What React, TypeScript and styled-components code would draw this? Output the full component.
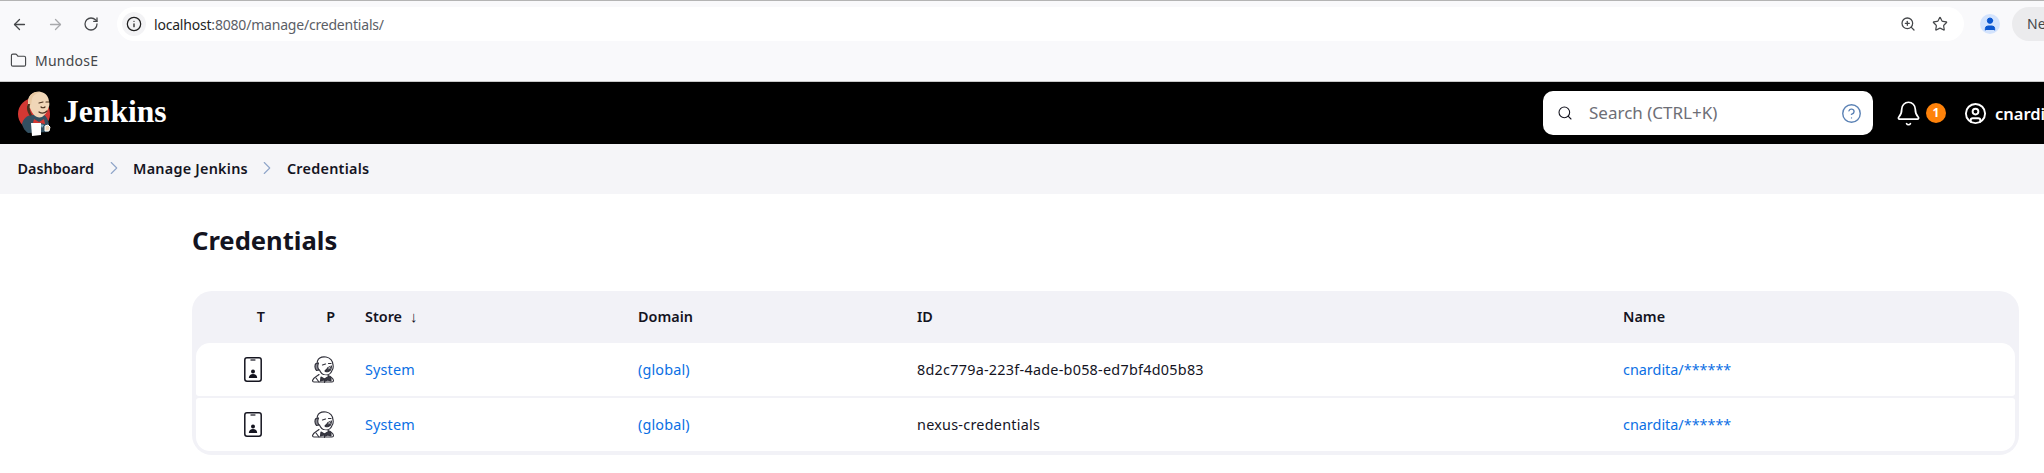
import React from "react";
import styled, { createGlobalStyle } from "styled-components";
import { ArrowLeft, ArrowRight, RotateCw, Info, ZoomIn, Star, Folder, Search, CircleHelp, Bell, CircleUser, User, ChevronRight } from "lucide-react";

const Global = createGlobalStyle`
  html, body { margin: 0; padding: 0; background: #fff; overflow: hidden; }
  body { width: 2044px; height: 473px; font-family: "Noto Sans", "Open Sans", sans-serif; color: #14141f; }
  * { box-sizing: border-box; }
`;

const Page = styled.div`width: 2044px; height: 473px; overflow: hidden; display: flex; flex-direction: column;`;

const BrowserToolbar = styled.div`
  height: 47px; flex: none; background: #f9f9fb; border-top: 1px solid #b4b4b4;
  display: flex; align-items: center; padding: 0 0 0 10px;
`;
const NavButton = styled.span<{ $off?: boolean }>`
  width: 18px; height: 18px; margin-right: 18px; flex: none; display: flex; align-items: center; justify-content: center;
  color: ${p => (p.$off ? "#a8a9ac" : "#45474a")};
`;
const Omnibox = styled.div`
  margin-left: -1px; width: 1847px; height: 34px; flex: none; background: #fff; border-radius: 17px;
  display: flex; align-items: center; padding: 0 0 0 5px;
`;
const InfoChip = styled.span`
  width: 24px; height: 24px; border-radius: 50%; background: #f3f3f5; color: #1f1f1f;
  display: flex; align-items: center; justify-content: center; flex: none;
`;
const Url = styled.span`
  margin-left: 8px; font-size: 14px; color: #1f1f1f; letter-spacing: -0.2px; white-space: nowrap;
`;
const UrlRest = styled.span`color: #5b5e66;`;
const OmniIcons = styled.div`margin-left: auto; padding-right: 16px; display: flex; align-items: center; gap: 16px; color: #45474a;`;
const Avatar = styled.span`
  width: 20px; height: 20px; margin-left: 16px; border-radius: 50%; background: #d3e3fd; color: #0b57d0; flex: none;
  display: flex; align-items: center; justify-content: center; overflow: hidden;
`;
const NewPill = styled.span`
  margin-left: 12px; width: 60px; height: 34px; border-radius: 17px 0 0 17px; background: #ebebed; color: #45474a; flex: none;
  padding-left: 15px; font-size: 14px; line-height: 34px;
`;

const Bookmarks = styled.div`
  height: 35px; flex: none; background: #f9f9fb; border-bottom: 1px solid #c8c8c8;
  display: flex; align-items: center; padding: 0 0 8px 10px; gap: 8px;
  font-size: 14px; color: #45474a; letter-spacing: 0.25px;
`;

const Header = styled.header`
  height: 62px; flex: none; background: #000; display: flex; align-items: center; padding-left: 17px; color: #fff; overflow: hidden;
`;
const Brand = styled.div`width: 1526px; flex: none; display: flex; align-items: center; gap: 8px;`;
const BrandName = styled.span`font-family: "Liberation Serif", serif; font-weight: 700; font-size: 31.6px; line-height: 1; margin-top: -2px;`;
const SearchBox = styled.div`
  width: 330px; height: 44px; flex: none; background: #fff; border-radius: 10px; color: #14141f;
  display: flex; align-items: center; padding: 0 11px 0 14px;
`;
const SearchText = styled.span`margin: -2px 0 0 16px; color: #6d6e76; font-size: 17px; flex: 1; white-space: nowrap;`;
const BellWrap = styled.span`margin-left: 21px; width: 28px; flex: none; display: flex; justify-content: center;`;
const Badge = styled.span`
  margin-left: 4px; width: 20px; height: 20px; border-radius: 50%; background: #fe820a; color: #fff; flex: none;
  font-size: 12px; font-weight: 700; line-height: 20px; text-align: center;
`;
const UserIconWrap = styled.span`margin-left: 18px; flex: none; display: flex;`;
const UserName = styled.span`margin-left: 8px; font-size: 16.5px; font-weight: 600; white-space: nowrap; flex: none;`;

const Crumbs = styled.nav`
  height: 50px; flex: none; background: #f5f5f8; display: flex; align-items: center; padding: 0 0 2px 17.5px;
  font-size: 14.4px; font-weight: 600; color: #14141f;
`;
const Crumb = styled.span<{ $spacing?: number }>`white-space: nowrap; letter-spacing: ${p => p.$spacing ?? 0.25}px;`;
const CrumbSep = styled.span`width: 39px; flex: none; display: flex; justify-content: center; color: #8fa5c9;`;

const Main = styled.main`padding: 0 25px 0 192px; flex: 1;`;
const Title = styled.h1`margin: 30px 0 33px; font-size: 25.6px; line-height: 34px; font-weight: 700; color: #14141f;`;

const Table = styled.div`
  width: 1827px; height: 164px; background: #f2f2f7; border-radius: 20px; padding: 0 4px 4px;
`;
const columns = "85px 70px 273px 279px 706px 1fr";
const HeadRow = styled.div`
  height: 52px; padding-bottom: 2px; display: grid; grid-template-columns: ${columns}; align-items: center;
  font-size: 14.4px; font-weight: 600; color: #14141f;
`;
const HeadCell = styled.div<{ $right?: boolean }>`
  white-space: nowrap;
  ${p => (p.$right ? "text-align: right; padding-right: 16px;" : "padding-left: 14px;")}
`;
const SortArrow = styled.span`margin-left: 8px; font-family: "Liberation Sans", sans-serif; font-weight: 400; font-size: 15px;`;
const Row = styled.div<{ $pos: "first" | "last" }>`
  height: 53px; margin-bottom: 2px; background: #fff; display: grid; grid-template-columns: ${columns}; align-items: center;
  font-size: 14.4px; color: #14141f;
  border-radius: ${p => (p.$pos === "first" ? "14px 14px 3px 3px" : "3px 3px 14px 14px")};
`;
const IconCell = styled.div<{ $inset: number }>`display: flex; justify-content: flex-end; padding-right: ${p => p.$inset}px;`;
const Cell = styled.div<{ $spacing?: number }>`padding-left: 14px; white-space: nowrap; letter-spacing: ${p => p.$spacing ?? 0}px;`;
const Link = styled.a`color: #0b6fe4; text-decoration: none;`;

const JenkinsLogo = () => (
  <svg width="38" height="46" viewBox="0 0 38 46">
    <circle cx="17" cy="24" r="16" fill="#d33833" />
    <path d="M5 34c1-5 5-9 10-9l12 0c3 2 5 6 5 11l-1 6-20 1C8 41 6 38 5 34z" fill="#335061" />
    <path d="M12 7c2-4 7-6 12-5 5 1 8 5 8 10 1 2 0 5-1 7-1 3-3 6-6 8-3 1-6 0-8-2-2-2-3-5-4-7-2 0-3-2-2-4 0-3 0-5 1-7z" fill="#f0d6b7" />
    <path d="M13 6c2-4 7-5 11-4-4 1-8 3-9 7l-1 6-2 0c-1-3-1-6 1-9z" fill="#e8c8a2" />
    <path d="M11 14c-2 3-1 8 2 12l2-1c-2-3-3-7-2-11z" fill="#49311f" />
    <path d="M22 13l4-1M29 12l3 0M24 17c1 1 3 1 4 0M22 22c3 2 6 1 8-1" stroke="#49311f" strokeWidth="1.2" fill="none" strokeLinecap="round" />
    <path d="M17 29l5 3 5-3 1 5-5-1-2 1-5-1z" fill="#d33833" />
    <path d="M23 34l2 4 2-3z" fill="#81b0c4" />
    <path d="M14 33h10v12l-9 1z" fill="#fff" />
    <path d="M28 36l3-1 2 2-1 4-4 0z" fill="#f0d6b7" stroke="#fff" strokeWidth="1" />
  </svg>
);

const PhoneIcon = () => (
  <svg width="18" height="25" viewBox="0 0 18 25" fill="none">
    <rect x="0.8" y="0.8" width="16.4" height="23.4" rx="2.2" stroke="#14141f" strokeWidth="1.5" />
    <path d="M6.5 3h5" stroke="#14141f" strokeWidth="1.2" />
    <circle cx="9" cy="14.6" r="2" fill="#14141f" />
    <path d="M4.8 21c.2-2.8 1.8-4 4.2-4s4 1.2 4.2 4z" fill="#14141f" />
  </svg>
);

const ButlerIcon = () => (
  <svg width="24" height="27" viewBox="0 0 24 27" fill="none" stroke="#30303a" strokeWidth="1.1" strokeLinejoin="round" strokeLinecap="round">
    <path d="M6.500 5c1-3 4.500-4.500 8.500-4 4 .5 7 4 7 8 .5 2 0 4-1 5.500-1 3-4 5-7 4.500-3-.5-4.500-2.500-5.500-5-2-.5-3-2-2.500-4 .2-2 0-3.500.5-5z" fill="#fff" />
    <path d="M5 7.500c-1.500 1.500-1.500 5 .5 7l2.500-.5c-1.500-2-1.500-4.500-.5-7z" fill="#8a8a92" />
    <path d="M11.500 9l3-1M17.500 7.500h2.500" strokeWidth="1.2" />
    <path d="M14 15c2 1.500 5 .5 6-2l.5-3-3.500 1.500-1.500 2z" fill="#3a3a44" />
    <path d="M17 10.500l2.500 2.500M19.500 10.500l-2 2.500" stroke="#fff" strokeWidth="0.6" />
    <path d="M8 18.500c-2 2-5.500 2.500-6.500 6 0 1 .5 1.500 1.500 1.500h18c1 0 1.500-.5 1.500-1.500-.5-2.500-3-4-5.500-5" fill="#fff" />
    <path d="M10 21l3.500 2 4-2.500 2.500 1.500v3l-3.500-1-2 1-2-1-3 1z" fill="#3a3a44" />
    <path d="M13.500 24v2.500M5 22l3 4" />
  </svg>
);

const rows = [
  { id: "8d2c779a-223f-4ade-b058-ed7bf4d05b83", pos: "first" as const },
  { id: "nexus-credentials", pos: "last" as const },
];

export default function App() {
  return (
    <Page>
      <Global />
      <BrowserToolbar>
        <NavButton><ArrowLeft size={17} strokeWidth={1.8} /></NavButton>
        <NavButton $off><ArrowRight size={17} strokeWidth={1.8} /></NavButton>
        <NavButton><RotateCw size={16} strokeWidth={1.9} /></NavButton>
        <Omnibox>
          <InfoChip><Info size={16} strokeWidth={1.9} /></InfoChip>
          <Url>localhost<UrlRest>:8080/manage/credentials/</UrlRest></Url>
          <OmniIcons>
            <ZoomIn size={16} strokeWidth={1.9} />
            <Star size={16} strokeWidth={1.8} />
          </OmniIcons>
        </Omnibox>
        <Avatar><User size={16} fill="#0b57d0" strokeWidth={1.5} /></Avatar>
        <NewPill>Ne</NewPill>
      </BrowserToolbar>
      <Bookmarks>
        <Folder size={17} strokeWidth={1.6} />
        <span>MundosE</span>
      </Bookmarks>
      <Header>
        <Brand>
          <JenkinsLogo />
          <BrandName>Jenkins</BrandName>
        </Brand>
        <SearchBox>
          <Search size={16} strokeWidth={1.6} />
          <SearchText>Search (CTRL+K)</SearchText>
          <CircleHelp size={21} strokeWidth={1.6} color="#5b82b5" />
        </SearchBox>
        <BellWrap><Bell size={27} strokeWidth={1.5} /></BellWrap>
        <Badge>1</Badge>
        <UserIconWrap><CircleUser size={23} strokeWidth={2} /></UserIconWrap>
        <UserName>cnardita</UserName>
      </Header>
      <Crumbs>
        <Crumb $spacing={0}>Dashboard</Crumb>
        <CrumbSep><ChevronRight size={22} strokeWidth={1.2} /></CrumbSep>
        <Crumb>Manage Jenkins</Crumb>
        <CrumbSep><ChevronRight size={22} strokeWidth={1.2} /></CrumbSep>
        <Crumb>Credentials</Crumb>
      </Crumbs>
      <Main>
        <Title>Credentials</Title>
        <Table>
          <HeadRow>
            <HeadCell $right>T</HeadCell>
            <HeadCell $right>P</HeadCell>
            <HeadCell>Store<SortArrow>↓</SortArrow></HeadCell>
            <HeadCell>Domain</HeadCell>
            <HeadCell>ID</HeadCell>
            <HeadCell>Name</HeadCell>
          </HeadRow>
          {rows.map(r => (
            <Row key={r.id} $pos={r.pos}>
              <IconCell $inset={19}><PhoneIcon /></IconCell>
              <IconCell $inset={16}><ButlerIcon /></IconCell>
              <Cell $spacing={0.15}><Link>System</Link></Cell>
              <Cell $spacing={0.15}><Link>(global)</Link></Cell>
              <Cell $spacing={0.25}>{r.id}</Cell>
              <Cell><Link>cnardita/******</Link></Cell>
            </Row>
          ))}
        </Table>
      </Main>
    </Page>
  );
}
